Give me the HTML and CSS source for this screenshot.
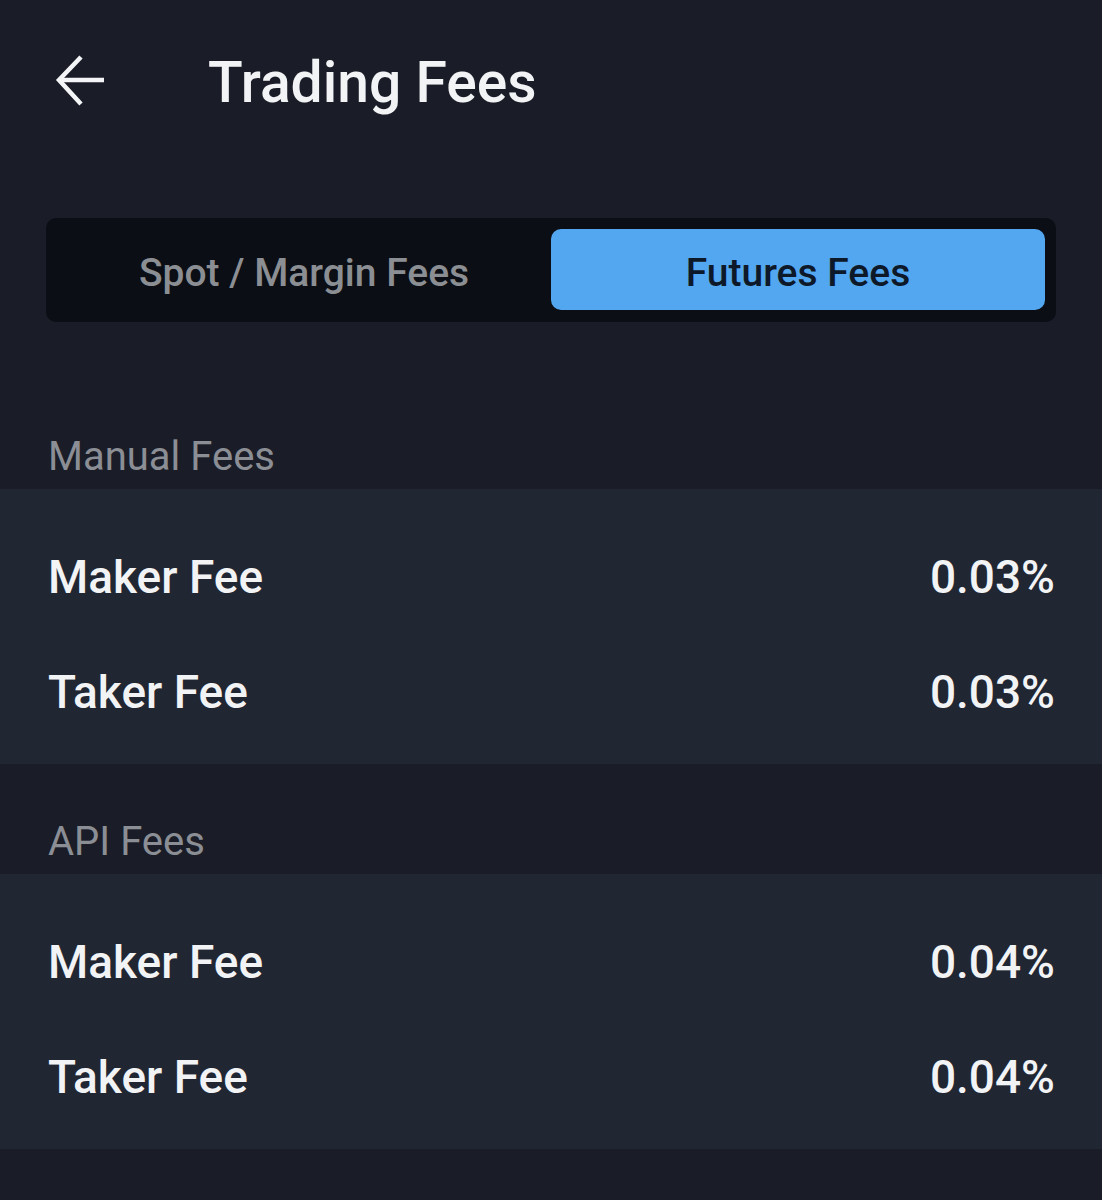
FILE: index.html
```html
<!DOCTYPE html>
<html lang="en">
<head>
    <meta charset="UTF-8">
    <meta name="viewport" content="width=device-width, initial-scale=1.0">
    <title>Trading Fees</title>
    <link rel="stylesheet" href="styles.css">
</head>
<body>

<header class="top-bar">
    <button class="back-btn" aria-label="Back">
        <svg width="52" height="54" viewBox="0 0 52 54" fill="none" stroke="#f4f5f7" stroke-width="4.5" stroke-linecap="butt" stroke-linejoin="miter">
            <path d="M50 25H5"/>
            <path d="M27 2L5 25L27 49"/>
        </svg>
    </button>
    <h1 class="title">Trading Fees</h1>
</header>

<div class="tabs">
    <button class="tab-btn">Spot / Margin Fees</button>
    <button class="tab-btn active-tab">Futures Fees</button>
</div>

<div class="section-label first">Manual Fees</div>
<div class="fee-card">
    <div class="fee-row"><span>Maker Fee</span><span>0.03%</span></div>
    <div class="fee-row"><span>Taker Fee</span><span>0.03%</span></div>
</div>

<div class="section-label">API Fees</div>
<div class="fee-card">
    <div class="fee-row"><span>Maker Fee</span><span>0.04%</span></div>
    <div class="fee-row"><span>Taker Fee</span><span>0.04%</span></div>
</div>

</body>
</html>
```

FILE: styles.css
```css
:root { --bg: #1a1d27; --card: #212633; --tab-bg: #0b0e15; --accent: #53a6f0; --text: #f2f3f5; --muted: #8b8e95; }
body { font-family: Roboto, "Noto Sans", sans-serif; background: var(--bg); color: var(--text); margin: 0; }

.top-bar { height: 160px; display: flex; align-items: center; padding-left: 54px; padding-top: 4px; box-sizing: border-box; }
.back-btn { background: none; border: none; padding: 0; width: 54px; height: 54px; display: flex; align-items: center; cursor: pointer; }
.title { margin: 0 0 0 100px; font-size: 57px; font-weight: 500; color: var(--text); }

.tabs { margin: 58px 46px 0; height: 104px; box-sizing: border-box; padding: 11px 11px 12px; background: var(--tab-bg); border-radius: 10px; display: grid; grid-template-columns: 1fr 1fr; }
.tab-btn { border: none; background: none; font-family: inherit; font-size: 39px; font-weight: 500; color: #8b8e93; border-radius: 10px; cursor: pointer; padding: 6px 0 0; }
.active-tab { background: var(--accent); color: #0d1828; }

.section-label { padding: 58px 48px 12px; font-size: 40px; line-height: 40px; color: var(--muted); }
.section-label.first { padding-top: 115px; }

.fee-card { background: var(--card); padding: 30px 0 15px; }
.fee-row { height: 115px; display: flex; justify-content: space-between; align-items: center; padding: 0 47px 0 48px; font-size: 46px; font-weight: 500; }
```
